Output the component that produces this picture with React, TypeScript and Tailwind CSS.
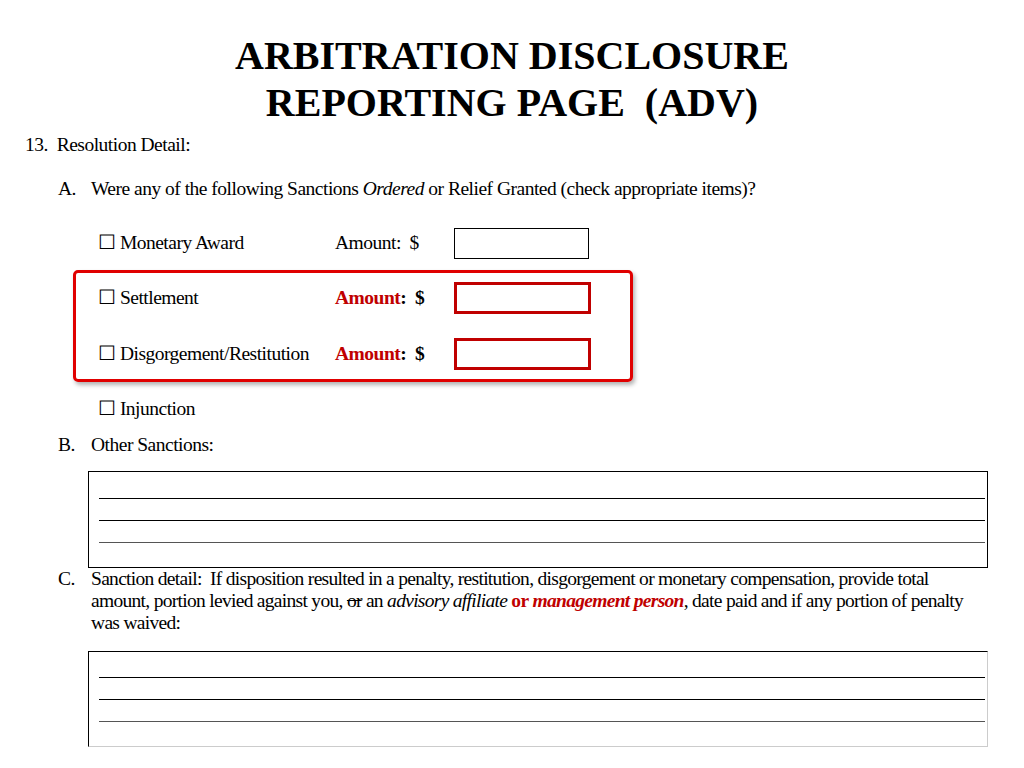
export default function App() {
  const lines = (
    <div className="flex flex-col gap-[21px] pl-[10px] pr-[2px]">
      <div className="h-[1px] bg-black" />
      <div className="h-[1px] bg-black" />
      <div className="h-[1px] bg-[#555]" />
    </div>
  );
  return (
    <div className="w-[1024px] h-[768px] bg-white text-black overflow-hidden tracking-[-0.5px]" style={{ fontFamily: '"Liberation Serif", serif' }}>
      <div className="pt-[32px] text-center font-bold text-[40px] leading-[47px] tracking-normal">
        <div>ARBITRATION DISCLOSURE</div>
        <div>REPORTING PAGE&nbsp; (ADV)</div>
      </div>
      <div className="text-[19.5px] leading-[22px]">
        <div className="pl-[25px] mt-[8px]">13.&nbsp; Resolution Detail:</div>
        <div className="pl-[58px] mt-[22px] flex">
          <span className="w-[33px]">A.</span>
          <span>Were any of the following Sanctions <i>Ordered</i> or Relief Granted (check appropriate items)?</span>
        </div>
        <div className="pl-[98px] mt-[27px] h-[32px] flex items-center">
          <span className="w-[237px]">☐ Monetary Award</span>
          <span className="w-[119px]">Amount:&nbsp; $</span>
          <div className="w-[135px] h-[31px] border border-black" />
        </div>
        <div className="ml-[73px] mt-[11px] w-[560px] h-[112px] border-[3px] border-[#e00000] rounded-[5px] shadow-[2px_3px_4px_rgba(0,0,0,0.3)] pl-[22px] flex flex-col justify-center gap-[24px]">
          {["Settlement", "Disgorgement/Restitution"].map((t) => (
            <div key={t} className="flex items-center h-[32px]">
              <span className="w-[237px]">☐ {t}</span>
              <span className="w-[119px] font-bold"><span className="text-[#c00000]">Amount</span>:&nbsp; $</span>
              <div className="w-[137px] h-[32px] border-[3px] border-[#c00000]" />
            </div>
          ))}
        </div>
        <div className="pl-[98px] mt-[16px]">☐ Injunction</div>
        <div className="pl-[58px] mt-[14px] flex">
          <span className="w-[33px]">B.</span>
          <span>Other Sanctions:</span>
        </div>
        <div className="ml-[88px] mt-[15px] w-[900px] h-[97px] border border-black pt-[26px]">{lines}</div>
        <div className="pl-[58px] flex">
          <span className="w-[33px] shrink-0">C.</span>
          <span className="tracking-[-0.7px] w-[895px]">
            Sanction detail:&nbsp; If disposition resulted in a penalty, restitution, disgorgement or monetary compensation, provide total amount, portion levied against you, <s>or</s> an <i>advisory affiliate</i> <b className="text-[#c00000]">or</b> <b className="text-[#c00000]"><i>management person</i></b>, date paid and if any portion of penalty was waived:
          </span>
        </div>
        <div className="ml-[88px] mt-[17px] w-[900px] h-[96px] border border-black border-b-[#ccc] border-r-[#ccc] pt-[25px]">{lines}</div>
      </div>
    </div>
  );
}
